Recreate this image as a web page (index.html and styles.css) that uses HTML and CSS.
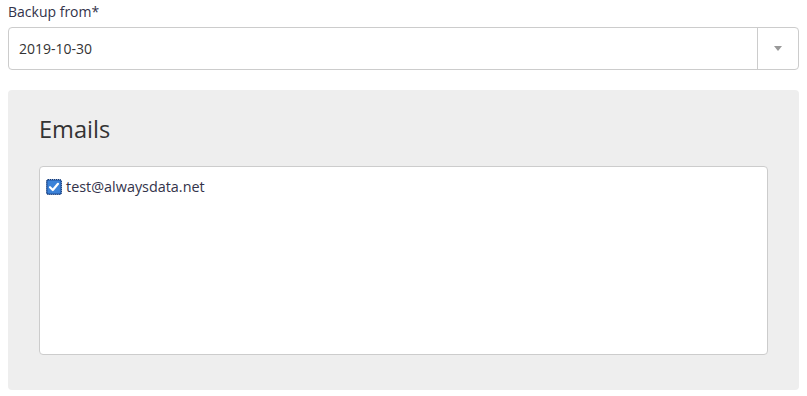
FILE: index.html
```html
<!DOCTYPE html>
<html>
<head>
<meta charset="utf-8">
<link rel="stylesheet" href="styles.css">
</head>
<body>
<div class="field">
  <label class="label">Backup from*</label>
  <div class="select">
    <span class="value">2019-10-30</span>
    <span class="arrow"><span class="tri"></span></span>
  </div>
</div>
<div class="panel">
  <h2 class="title">Emails</h2>
  <div class="list">
    <label class="item">
      <svg class="check" width="16" height="16" viewBox="0 0 16 16">
        <rect x="0.5" y="0.5" width="15" height="15" rx="1.5" fill="#1f4f9a"/>
        <rect x="1.5" y="1.5" width="13" height="13" rx="1" fill="#3b82d8"/>
        <rect x="0.5" y="0.5" width="15" height="15" rx="1.5" fill="none" stroke="#123a78" stroke-dasharray="1 1"/>
        <path d="M4 8.2 L6.8 11 L12 4.8" fill="none" stroke="#fff" stroke-width="2.2" stroke-linecap="round" stroke-linejoin="round"/>
      </svg>
      <span>test@alwaysdata.net</span>
    </label>
  </div>
</div>
</body>
</html>
```
FILE: styles.css
```css
html, body {
  margin: 0;
  padding: 0;
  background: #fff;
}
body {
  padding: 0 8px;
  font-family: "Open Sans", "Noto Sans", sans-serif;
  color: #333;
}
.field {
  display: flex;
  flex-direction: column;
}
.label {
  font-size: 14px;
  line-height: 20px;
  color: #33334a;
  padding-top: 2px;
  height: 25px;
}
.select {
  display: flex;
  align-items: stretch;
  height: 41px;
  border: 1px solid #ccc;
  border-radius: 4px;
  background: #fff;
}
.value {
  flex: 1;
  display: flex;
  align-items: center;
  padding-left: 10px;
  font-size: 14px;
  color: #333;
}
.arrow {
  width: 40px;
  border-left: 1px solid #ccc;
  display: flex;
  align-items: center;
  justify-content: center;
}
.tri {
  width: 0;
  height: 0;
  border-left: 4px solid transparent;
  border-right: 4px solid transparent;
  border-top: 5px solid #999;
}
.panel {
  margin-top: 20px;
  background: #eee;
  border-radius: 4px;
  padding: 24px 31px 35px 31px;
  height: 241px;
}
.title {
  margin: 0;
  font-weight: 400;
  font-size: 23.6px;
  line-height: 30px;
  color: #333;
  height: 52px;
}
.list {
  background: #fff;
  border: 1px solid #ccc;
  border-radius: 4px;
  height: 189px;
  padding: 10px 6px;
  box-sizing: border-box;
}
.item {
  display: flex;
  align-items: center;
  gap: 4px;
  font-size: 14.4px;
  color: #33334a;
}
.check {
  flex: none;
}
```
